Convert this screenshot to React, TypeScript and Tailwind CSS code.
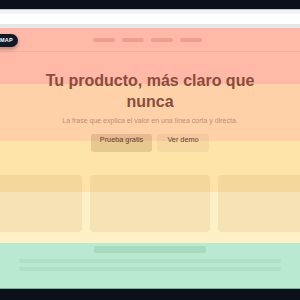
import React from "react";

export default function App() {
  const font = { fontFamily: '"Liberation Sans", Arial, sans-serif' };
  return (
    <div className="w-[300px] h-[300px] overflow-hidden bg-[#0b0f19] flex flex-col" style={font}>
      <div className="h-[9px] shrink-0 bg-[#0b0f19]" />
      <div className="h-[1px] shrink-0 bg-[#c5c9d0]" />
      <div className="h-[4px] shrink-0 bg-[#f3f4f6]" />
      <div className="h-[10px] shrink-0 bg-white" />
      <div className="h-[4px] shrink-0 bg-[#e5e7eb]" />
      <div className="relative h-[260px] shrink-0 flex flex-col bg-[linear-gradient(to_bottom,#ffb9a6_0px,#ffb9a6_56px,#fed1a9_56px,#fed1a9_113px,#fee4a9_113px,#fee4a9_164px,#fff0c6_164px,#fff0c6_215px,#b9e9d1_215px,#b9e9d1_260px)]">
        <div className="absolute left-[-8px] top-[6px] h-[13px] rounded-full bg-[#111827] shadow-[0_2px_4px_rgba(0,0,0,0.3)] flex items-center pl-[8px] pr-[5px]">
          <span className="text-[5.5px] font-bold text-white tracking-[0.05em] leading-none">MAP</span>
        </div>
        <div className="h-[23px] shrink-0 flex items-center justify-center gap-[7px] pr-[5px]">
          <div className="w-[22px] h-[4px] rounded-full bg-[#eba191]" />
          <div className="w-[22px] h-[4px] rounded-full bg-[#eba191]" />
          <div className="w-[22px] h-[4px] rounded-full bg-[#eba191]" />
          <div className="w-[22px] h-[4px] rounded-full bg-[#eba191]" />
        </div>
        <div className="h-[1px] shrink-0 bg-[#f7ae9b]" />
        <h1 className="mt-[18px] text-center text-[16px] leading-[21px] font-bold text-[#8b4c3c]">
          Tu producto, más claro que
          <br />
          nunca
        </h1>
        <p className="mt-[4px] text-center text-[7px] leading-[10px] text-[#c48c76]">
          La frase que explica el valor en una línea corta y directa.
        </p>
        <div className="mt-[8px] flex justify-center gap-[5px]">
          <div className="w-[61px] h-[18px] rounded-[3px] bg-[#8a5a26]/20 text-[7.3px] leading-[10px] pt-[1px] text-center text-[#624030]">
            Prueba gratis
          </div>
          <div className="w-[52px] h-[18px] rounded-[3px] bg-[#8a5a26]/[0.07] text-[7.3px] leading-[10px] pt-[1px] text-center text-[#624030]">
            Ver demo
          </div>
        </div>
        <div className="mt-[23px] flex justify-center gap-[8px] overflow-hidden">
          <div className="w-[120px] h-[57px] shrink-0 rounded-[4px] bg-[#a0702a]/10" />
          <div className="w-[120px] h-[57px] shrink-0 rounded-[4px] bg-[#a0702a]/10" />
          <div className="w-[120px] h-[57px] shrink-0 rounded-[4px] bg-[#a0702a]/10" />
        </div>
        <div className="mt-[14px] flex justify-center">
          <div className="w-[112px] h-[7px] rounded-[2px] bg-[#a7dbc0]" />
        </div>
        <div className="mt-[6px] flex justify-center">
          <div className="w-[262px] h-[4px] rounded-full bg-[#afe1c7]" />
        </div>
        <div className="mt-[4px] flex justify-center">
          <div className="w-[262px] h-[4px] rounded-full bg-[#afe1c7]" />
        </div>
      </div>
      <div className="h-[1px] shrink-0 bg-[#7fae96]" />
      <div className="flex-1 bg-[#0b0f19]" />
    </div>
  );
}
